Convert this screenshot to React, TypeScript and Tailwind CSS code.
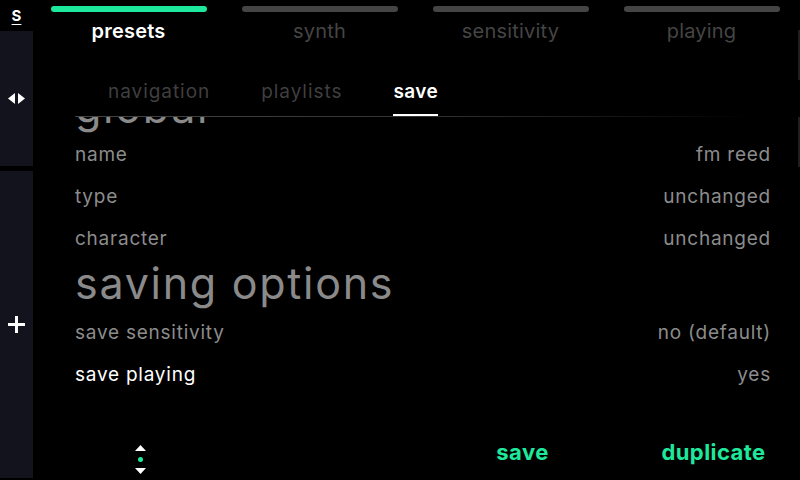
import React from 'react'

const font = "font-['Inter','Liberation_Sans',sans-serif]"

const tabs = [
  { label: 'presets', active: true },
  { label: 'synth', active: false },
  { label: 'sensitivity', active: false },
  { label: 'playing', active: false },
]

const subtabs = [
  { label: 'navigation', active: false },
  { label: 'playlists', active: false },
  { label: 'save', active: true },
]

interface Row {
  label: string
  value: string
  focused?: boolean
}

const globalRows: Row[] = [
  { label: 'name', value: 'fm reed' },
  { label: 'type', value: 'unchanged' },
  { label: 'character', value: 'unchanged' },
]

const savingRows: Row[] = [
  { label: 'save sensitivity', value: 'no (default)' },
  { label: 'save playing', value: 'yes', focused: true },
]

function SettingRow({ row }: { row: Row }) {
  return (
    <div className="flex h-[42px] items-center justify-between text-[19px] tracking-[0.04em]">
      <span className={row.focused ? 'text-white' : 'text-[#8c8c8c]'}>{row.label}</span>
      <span className="text-[#8c8c8c]">{row.value}</span>
    </div>
  )
}

function Sidebar() {
  return (
    <aside className="flex w-[33px] shrink-0 flex-col pb-[2px]">
      <div className="flex h-[31px] items-center justify-center">
        <span className="text-[15px] font-bold leading-none text-white underline underline-offset-[3px]">S</span>
      </div>
      <div className="flex h-[135px] items-center justify-center bg-[#13131d]">
        <svg width="17" height="11" viewBox="0 0 17 11">
          <polygon points="7,0 7,11 0,5.5" fill="white" />
          <polygon points="10,0 10,11 17,5.5" fill="white" />
        </svg>
      </div>
      <div className="mt-[5px] flex flex-1 items-center justify-center bg-[#13131d]">
        <svg width="17" height="17" viewBox="0 0 17 17">
          <rect x="7" y="0" width="3" height="17" fill="white" />
          <rect x="0" y="7" width="17" height="3" fill="white" />
        </svg>
      </div>
    </aside>
  )
}

export default function App() {
  return (
    <div className={`relative flex h-[480px] w-[800px] overflow-hidden bg-black ${font}`}>
      <Sidebar />
      <main className="flex min-w-0 flex-1 flex-col">
        {/* top tabs */}
        <div className="grid w-[764px] grid-cols-4 pt-[6px]">
          {tabs.map((t) => (
            <div key={t.label} className="flex flex-col items-center">
              <div
                className={`h-[6px] w-[156px] rounded-full ${t.active ? 'bg-[#1ee89b]' : 'bg-[#454545]'}`}
              />
              <span
                className={`mt-[7px] text-[20px] leading-[24px] tracking-[0.01em] ${
                  t.active ? 'font-semibold text-white' : 'text-[#454545]'
                }`}
              >
                {t.label}
              </span>
            </div>
          ))}
        </div>

        {/* sub tabs */}
        <div className="relative z-10 mt-[37px] bg-black">
          <div className="flex gap-[51px] pl-[75px]">
            {subtabs.map((s) => (
              <div
                key={s.label}
                className={`pb-[10px] text-[19px] leading-[24px] ${
                  s.active
                    ? 'border-b-2 border-white font-semibold tracking-[0.02em] text-white'
                    : 'border-b-2 border-transparent tracking-[0.05em] text-[#3f3f3f]'
                }`}
              >
                {s.label}
              </div>
            ))}
          </div>
          <div className="ml-[42px] h-px w-[680px] bg-gradient-to-r from-[#444444] via-[#333333] to-transparent" />
        </div>

        {/* scrolled content */}
        <div className="h-[307px] overflow-hidden pl-[42px] pr-[29px]">
          <h2 className="-mt-[35px] mb-[2px] text-[43px] leading-[50px] tracking-[0.04em] text-[#8a8a8a]">global</h2>
          {globalRows.map((r) => (
            <SettingRow key={r.label} row={r} />
          ))}
          <h2 className="-mt-[2px] mb-[4px] text-[43px] leading-[50px] tracking-[0.04em] text-[#8a8a8a]">saving options</h2>
          {savingRows.map((r) => (
            <SettingRow key={r.label} row={r} />
          ))}
        </div>

        {/* bottom actions */}
        <div className="ml-[12px] grid h-[56px] w-[764px] grid-cols-4 items-center">
          <div className="mt-[14px] flex flex-col items-center gap-[6px]">
            <svg width="11" height="6" viewBox="0 0 11 6">
              <polygon points="0,6 11,6 5.5,0" fill="white" />
            </svg>
            <span className="h-[5px] w-[5px] rounded-full bg-[#1ee89b]" />
            <svg width="11" height="6" viewBox="0 0 11 6">
              <polygon points="0,0 11,0 5.5,6" fill="white" />
            </svg>
          </div>
          <div />
          <div className="text-center text-[22px] font-bold tracking-[0.02em] text-[#1ee89b]">save</div>
          <div className="text-center text-[22px] font-bold tracking-[0.02em] text-[#1ee89b]">duplicate</div>
        </div>
      </main>

      {/* scroll indicator */}
      <div className="absolute right-0 top-[30px] h-[137px] w-[2px] bg-[#1f1f1f]" />
    </div>
  )
}
